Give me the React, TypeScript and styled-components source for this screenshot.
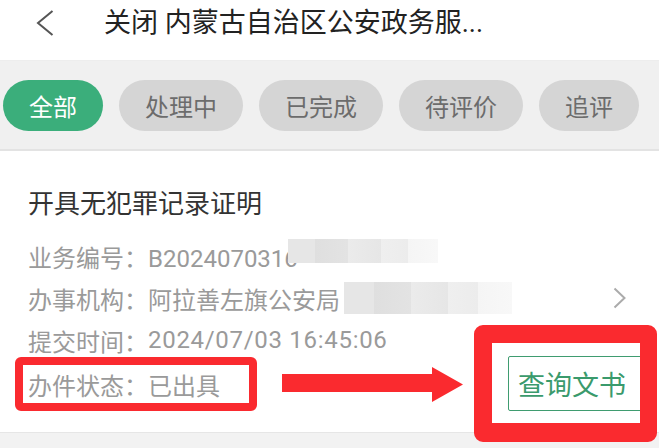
import React from 'react';
import styled, { createGlobalStyle } from 'styled-components';

const GlobalStyle = createGlobalStyle`
  html, body {
    margin: 0;
    background: #fff;
    font-family: Roboto, "Noto Sans CJK SC", sans-serif;
  }
  * { box-sizing: border-box; }
`;

const tabs = ['全部', '处理中', '已完成', '待评价', '追评'];
const RED = '#fa2a2f';

export default function App() {
  return (
    <Page>
      <GlobalStyle />
      <Header>
        <svg width="18" height="26" viewBox="0 0 18 26">
          <polyline points="16.5,1 2,13 16.5,25" fill="none" stroke="#555" strokeWidth="2" />
        </svg>
        <Title>关闭 内蒙古自治区公安政务服...</Title>
      </Header>

      <TabBar>
        {tabs.map((t, i) => (
          <Tab key={t} $active={i === 0}>{t}</Tab>
        ))}
      </TabBar>

      <Card>
        <CardTitle>开具无犯罪记录证明</CardTitle>
        <InfoRow>
          业务编号：B2024070316
          <Blur $w={150} $h={24} $shift={-10} $up={5} />
        </InfoRow>
        <InfoRow>
          办事机构：阿拉善左旗公安局
          <Blur $w={168} $h={32} $shift={4} $up={0} />
          <Chevron width="13" height="22" viewBox="0 0 13 22">
            <polyline points="1.5,1.5 11.5,11 1.5,20.5" fill="none" stroke="#ababab" strokeWidth="2" />
          </Chevron>
        </InfoRow>
        <InfoRow>
          提交时间：<Value $spacing={0.7}>2024/07/03 16:45:06</Value>
        </InfoRow>
        <StatusRow>
          <Highlight>办件状态：已出具</Highlight>
          <Arrow width="181" height="35" viewBox="0 0 181 35">
            <path d="M0 7H150V0L181 17.5L150 35V25H0Z" fill={RED} />
          </Arrow>
          <Frame>
            <DocButton>查询文书</DocButton>
          </Frame>
        </StatusRow>
      </Card>

      <Footer />
    </Page>
  );
}

const Page = styled.div`
  width: 659px;
  height: 448px;
  overflow: hidden;
  display: flex;
  flex-direction: column;
`;

const Header = styled.div`
  height: 61px;
  flex-shrink: 0;
  display: flex;
  align-items: center;
  gap: 50px;
  padding: 0 0 15px 36px;
  border-bottom: 1px solid #ededed;
`;

const Title = styled.div`
  font-size: 27px;
  line-height: 30px;
  color: #222;
  white-space: nowrap;
`;

const TabBar = styled.div`
  flex-shrink: 0;
  display: flex;
  gap: 16px;
  padding: 19px 0 18px 3px;
  background: #f0f0f0;
  border-bottom: 2px solid #e3e3e3;
`;

const Tab = styled.div<{ $active?: boolean }>`
  height: 51px;
  padding: 0 26px;
  border-radius: 26px;
  display: flex;
  align-items: center;
  font-size: 24px;
  white-space: nowrap;
  background: ${(p) => (p.$active ? '#3bae7b' : '#d5d5d5')};
  color: ${(p) => (p.$active ? '#fff' : '#6c6c6c')};
`;

const Card = styled.div`
  flex-shrink: 0;
  padding: 35px 33px 21px 28px;
  background: #fff;
`;

const CardTitle = styled.div`
  font-size: 26px;
  line-height: 36px;
  color: #333;
  margin-bottom: 13px;
`;

const InfoRow = styled.div`
  height: 42px;
  display: flex;
  align-items: center;
  font-size: 24px;
  color: #9a9a9a;
  white-space: nowrap;
`;

const Value = styled.span<{ $spacing: number }>`
  letter-spacing: ${(p) => p.$spacing}px;
`;

const Chevron = styled.svg`
  margin-left: auto;
`;

const Blur = styled.span<{ $w: number; $h: number; $shift: number; $up: number }>`
  display: inline-block;
  flex-shrink: 0;
  width: ${(p) => p.$w}px;
  height: ${(p) => p.$h}px;
  margin-left: ${(p) => p.$shift}px;
  margin-bottom: ${(p) => p.$up * 2}px;
  background: linear-gradient(
    90deg,
    #e6e6e6 0,
    #e6e6e6 18%,
    #dfdfdf 18%,
    #e3e3e3 40%,
    #ebebeb 40%,
    #e6e6e6 62%,
    #efefef 62%,
    #ececec 80%,
    #f5f5f5 80%,
    #f8f8f8 100%
  );
`;

const StatusRow = styled.div`
  display: flex;
  align-items: center;
  margin: -4px -31px 0 -13px;
`;

const Highlight = styled.div`
  flex-shrink: 0;
  width: 242px;
  height: 54px;
  border: 8px solid ${RED};
  border-radius: 6px;
  padding-left: 5px;
  display: flex;
  align-items: center;
  font-size: 24px;
  color: #9a9a9a;
  white-space: nowrap;
`;

const Arrow = styled.svg`
  flex-shrink: 0;
  margin-left: 25px;
`;

const Frame = styled.div`
  flex-shrink: 0;
  position: relative;
  z-index: 1;
  width: 183px;
  height: 117px;
  margin: -32px 0 -31px 11px;
  border: 18px solid ${RED};
  border-right-width: 17px;
  border-bottom-width: 19px;
  border-radius: 9px;
  background: #fff;
  overflow: hidden;
  padding: 13px 0 0 16px;
`;

const DocButton = styled.div`
  width: 150px;
  height: 55px;
  border: 1.5px solid #3f9c70;
  border-radius: 2px;
  display: flex;
  align-items: center;
  padding-left: 9px;
  font-size: 27px;
  color: #3a9a6c;
  white-space: nowrap;
`;

const Footer = styled.div`
  flex: 1;
  background: #f2f2f2;
  border-top: 1px solid #e6e6e6;
`;
